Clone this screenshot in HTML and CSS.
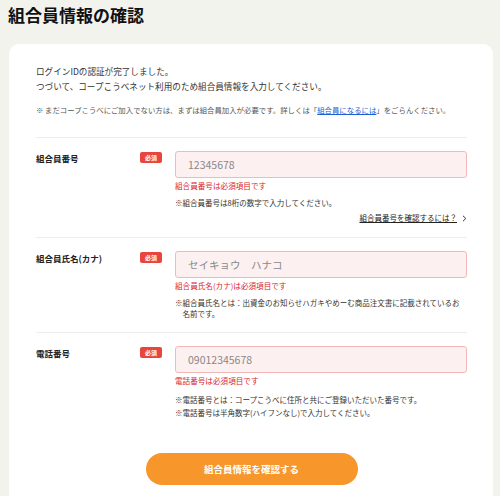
FILE: index.html
```html
<!DOCTYPE html>
<html lang="ja">
<head>
    <meta charset="UTF-8">
    <meta name="viewport" content="width=device-width, initial-scale=1.0">
    <title>組合員情報の確認</title>
    <link rel="stylesheet" href="styles.css">
</head>
<body>

    <!-- Page Title -->
    <h1 class="page-title">組合員情報の確認</h1>

    <!-- Form Card -->
    <main class="card">
        <div class="intro">
            <p>ログインIDの認証が完了しました。</p>
            <p>つづいて、コープこうべネット利用のため組合員情報を入力してください。</p>
        </div>
        <p class="intro-note">※ まだコープこうべにご加入でない方は、まずは組合員加入が必要です。詳しくは「<a href="#">組合員になるには</a>」をごらんください。</p>

        <form class="form">
            <div class="row">
                <label class="label">組合員番号</label>
                <span class="badge">必須</span>
                <div class="field">
                    <input class="input" type="text" placeholder="12345678">
                    <p class="error">組合員番号は必須項目です</p>
                    <p class="note">※組合員番号は8桁の数字で入力してください。</p>
                    <div class="help">
                        <a href="#">組合員番号を確認するには？</a>
                        <svg width="5" height="7" viewBox="0 0 5 7"><path d="M1 0.8 L3.8 3.5 L1 6.2" fill="none" stroke="#333" stroke-width="1"/></svg>
                    </div>
                </div>
            </div>

            <div class="row">
                <label class="label">組合員氏名(カナ)</label>
                <span class="badge">必須</span>
                <div class="field">
                    <input class="input" type="text" placeholder="セイキョウ　ハナコ">
                    <p class="error">組合員氏名(カナ)は必須項目です</p>
                    <p class="note note-wrap">※組合員氏名とは：出資金のお知らせハガキやめーむ商品注文書に記載されているお名前です。</p>
                </div>
            </div>

            <div class="row">
                <label class="label">電話番号</label>
                <span class="badge">必須</span>
                <div class="field">
                    <input class="input" type="text" placeholder="09012345678">
                    <p class="error">電話番号は必須項目です</p>
                    <div class="notes">
                        <p class="note">※電話番号とは：コープこうべに住所と共にご登録いただいた番号です。</p>
                        <p class="note">※電話番号は半角数字(ハイフンなし)で入力してください。</p>
                    </div>
                </div>
            </div>

            <div class="actions">
                <button class="submit-btn" type="button">組合員情報を確認する</button>
            </div>
        </form>
    </main>

</body>
</html>
```

FILE: styles.css
```css
/* Reset styles */
* {
    margin: 0;
    padding: 0;
    box-sizing: border-box;
    font-family: "Noto Sans CJK JP", "Noto Sans", sans-serif;
}

body {
    background: #f3f3ee;
    color: #333;
    overflow: hidden;
}

/* Title */
.page-title {
    padding: 3px 8px 0;
    font-size: 17px;
    line-height: 24px;
    font-weight: bold;
    color: #111;
}

/* Card */
.card {
    margin: 17px 7px 0 9px;
    padding: 20px 26px 20px 27px;
    background: #fff;
    border-radius: 10px;
}

.intro p {
    font-size: 8.6px;
    line-height: 15px;
    color: #333;
}

.intro-note {
    margin-top: 10px;
    font-size: 7.4px;
    line-height: 12px;
    color: #555;
}

.intro-note a {
    color: #1a5fd6;
}

/* Form rows */
.form {
    margin-top: 21px;
}

.row {
    display: flex;
    align-items: flex-start;
    padding: 13px 0;
    border-top: 1px solid #ededed;
}

.row:last-of-type {
    padding-bottom: 12px;
    border-bottom: 1px solid #ededed;
}

.label {
    width: 104px;
    padding-top: 2px;
    font-size: 8.5px;
    line-height: 11px;
    font-weight: bold;
    color: #222;
}

.badge {
    width: 22px;
    height: 11px;
    margin-top: 1px;
    background: #e8453c;
    border-radius: 2px;
    color: #fff;
    font-size: 6px;
    font-weight: bold;
    line-height: 11px;
    text-align: center;
}

.field {
    flex: 1;
    margin-left: 13px;
}

.input {
    display: block;
    width: 100%;
    height: 27px;
    padding: 0 12px;
    background: #fdf0f0;
    border: 1px solid #f3b9b9;
    border-radius: 3px;
    font-size: 10.5px;
    color: #333;
    outline: none;
}

.input::placeholder {
    color: #888;
}

.error {
    margin-top: 2px;
    font-size: 7.6px;
    line-height: 12px;
    color: #d9262c;
}

.note {
    margin-top: 5px;
    padding-left: 1em;
    text-indent: -1em;
    font-size: 7.5px;
    line-height: 12px;
    color: #333;
}

.note-wrap {
    padding-right: 2px;
    line-height: 11px;
}

.notes {
    margin-top: 6px;
}

.notes .note {
    margin-top: 0;
    line-height: 13px;
}

.help {
    display: flex;
    justify-content: flex-end;
    align-items: center;
    gap: 5px;
    margin-top: 3px;
    line-height: 12px;
}

.help a {
    font-size: 7.5px;
    color: #222;
}

/* Submit */
.actions {
    display: flex;
    justify-content: center;
    margin-top: 21px;
}

.submit-btn {
    width: 212px;
    height: 32px;
    background: #f7962a;
    border: none;
    border-radius: 16px;
    color: #fff;
    font-size: 9.5px;
    font-weight: bold;
    cursor: pointer;
}
```
